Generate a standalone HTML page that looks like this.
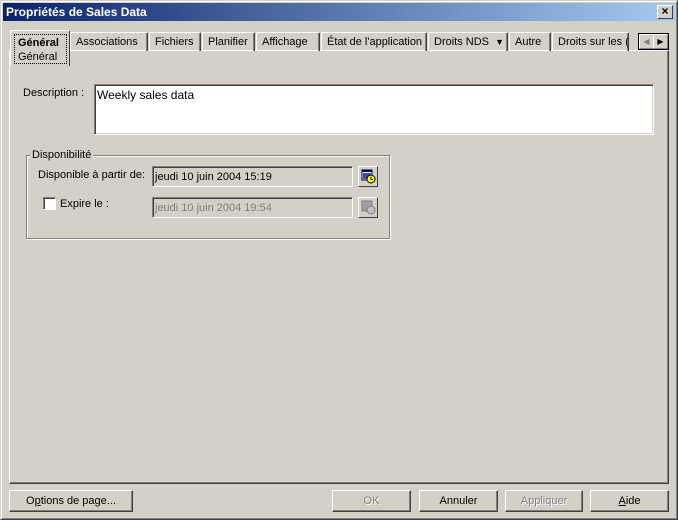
<!DOCTYPE html>
<html><head><meta charset="utf-8"><style>
*{box-sizing:border-box;margin:0;padding:0}
body{width:678px;height:520px;background:#d4d0c8;font-family:"Liberation Sans",Arial,sans-serif;font-size:11px;color:#000;position:relative;overflow:hidden}
.abs{position:absolute}
.win{left:0;top:0;width:678px;height:520px;border:1px solid;border-color:#d4d0c8 #404040 #404040 #d4d0c8;box-shadow:inset 1px 1px 0 #fff,inset -1px -1px 0 #808080}
.title{left:3px;top:3px;width:672px;height:18px;background:linear-gradient(90deg,#0a246a,#a6caf0);color:#fff;font-weight:bold;font-size:12px;line-height:18px;padding-left:3px}
.close{right:5px;top:5px;width:16px;height:14px;background:#d4d0c8;border:1px solid;border-color:#fff #404040 #404040 #fff;font-size:12px;font-weight:bold;line-height:11px;text-align:center;color:#000}
.panel{left:9px;top:50px;width:660px;height:434px;border:1px solid;border-color:#fff #404040 #404040 #fff;box-shadow:inset -1px -1px 0 #808080}
.tab{top:32px;height:19px;border:1px solid;border-bottom:none;border-color:#fff #404040 #404040 #fff;border-radius:2px 2px 0 0;line-height:19px;padding-left:5px;white-space:nowrap;overflow:hidden;box-shadow:inset -1px 0 0 #808080}
.sel{left:10px;top:30px;width:60px;height:36px;border:1px solid;border-color:#fff #404040 #808080 #fff;border-bottom:none;background:#d4d0c8;z-index:2;border-radius:2px 2px 0 0}
.sel div{position:absolute;left:3px;top:3px;width:53px;height:30px;border:1px dotted #000;padding-left:3px;padding-top:1px;line-height:14px}
.sunk{border:1px solid;border-color:#808080 #fff #fff #808080;box-shadow:inset 1px 1px 0 #404040,inset -1px -1px 0 #d4d0c8}
.btn{height:22px;border:1px solid;border-color:#fff #404040 #404040 #fff;box-shadow:inset -1px -1px 0 #808080;text-align:center;line-height:20px;font-size:11px}
.dis{color:#808080;text-shadow:1px 1px 0 #fff}
.grp{left:26px;top:155px;width:364px;height:84px;border:1px solid #808080;box-shadow:1px 1px 0 #fff,inset 1px 1px 0 #fff}
</style></head><body>
<div class="abs win"></div>
<div class="abs title">Propriétés de Sales Data</div>
<div class="abs close">×</div>
<div class="abs panel"></div>
<div class="abs sel"><div><b>Général</b><br>Général</div></div>
<div class="abs tab" style="left:70px;width:78px">Associations</div>
<div class="abs tab" style="left:149px;width:52px">Fichiers</div>
<div class="abs tab" style="left:202px;width:53px">Planifier</div>
<div class="abs tab" style="left:256px;width:64px">Affichage</div>
<div class="abs tab" style="left:321px;width:106px">État de l'application</div>
<div class="abs tab" style="left:428px;width:80px">Droits NDS &nbsp;<span style="font-size:9px">▼</span></div>
<div class="abs tab" style="left:509px;width:42px">Autre</div>
<div class="abs tab" style="left:552px;width:77px">Droits sur les (</div>
<div class="abs" style="left:638px;top:33px;width:31px;height:17px;border:1px solid #000;background:#d4d0c8"></div>
<div class="abs" style="left:639px;top:34px;width:15px;height:15px;border:1px solid;border-color:#fff #808080 #808080 #fff;color:#808080;font-size:8px;text-align:center;line-height:13px">◀</div>
<div class="abs" style="left:653px;top:34px;width:15px;height:15px;border:1px solid;border-color:#fff #808080 #808080 #fff;font-size:8px;text-align:center;line-height:13px">▶</div>
<div class="abs" style="left:23px;top:87px">Description :</div>
<div class="abs sunk" style="left:94px;top:84px;width:560px;height:51px;background:#fff;font-size:12px;padding:3px 2px">Weekly sales data</div>
<div class="abs grp"></div>
<div class="abs" style="left:30px;top:149px;background:#d4d0c8;padding:0 2px">Disponibilité</div>
<div class="abs" style="left:38px;top:169px">Disponible à partir de:</div>
<div class="abs sunk" style="left:152px;top:166px;width:201px;height:21px;padding:4px 2px">jeudi 10 juin 2004 15:19</div>
<div class="abs btn" style="left:358px;top:166px;width:20px;height:21px;box-shadow:none"><svg width="16" height="16" viewBox="0 0 16 16" style="margin-top:1px"><rect x="2" y="2" width="10" height="10" fill="#fff" stroke="#000"/><rect x="3" y="5" width="8" height="6" fill="#3050c0"/><rect x="2" y="2" width="10" height="2" fill="#000080"/><circle cx="11" cy="11" r="4" fill="#ff0" stroke="#000"/><path d="M11 8.5v3h2" stroke="#000" fill="none"/></svg></div>
<div class="abs" style="left:43px;top:197px;width:13px;height:13px;background:#fff;border:1px solid;border-color:#808080 #fff #fff #808080;box-shadow:inset 1px 1px 0 #404040"></div>
<div class="abs" style="left:60px;top:198px">Expire le :</div>
<div class="abs sunk" style="left:152px;top:197px;width:201px;height:21px;padding:4px 2px;color:#808080">jeudi 10 juin 2004 19:54</div>
<div class="abs btn" style="left:358px;top:197px;width:20px;height:21px;box-shadow:none"><svg width="16" height="16" viewBox="0 0 16 16" style="margin-top:1px"><rect x="2" y="2" width="10" height="10" fill="#a0a0a0" stroke="#808080"/><circle cx="11" cy="11" r="4" fill="#c0c0c0" stroke="#808080"/></svg></div>
<div class="abs btn" style="left:9px;top:490px;width:124px">O<u>p</u>tions de page...</div>
<div class="abs btn dis" style="left:332px;top:490px;width:79px">OK</div>
<div class="abs btn" style="left:419px;top:490px;width:79px">Annuler</div>
<div class="abs btn dis" style="left:505px;top:490px;width:78px">Appliquer</div>
<div class="abs btn" style="left:590px;top:490px;width:79px"><u>A</u>ide</div>
</body></html>
